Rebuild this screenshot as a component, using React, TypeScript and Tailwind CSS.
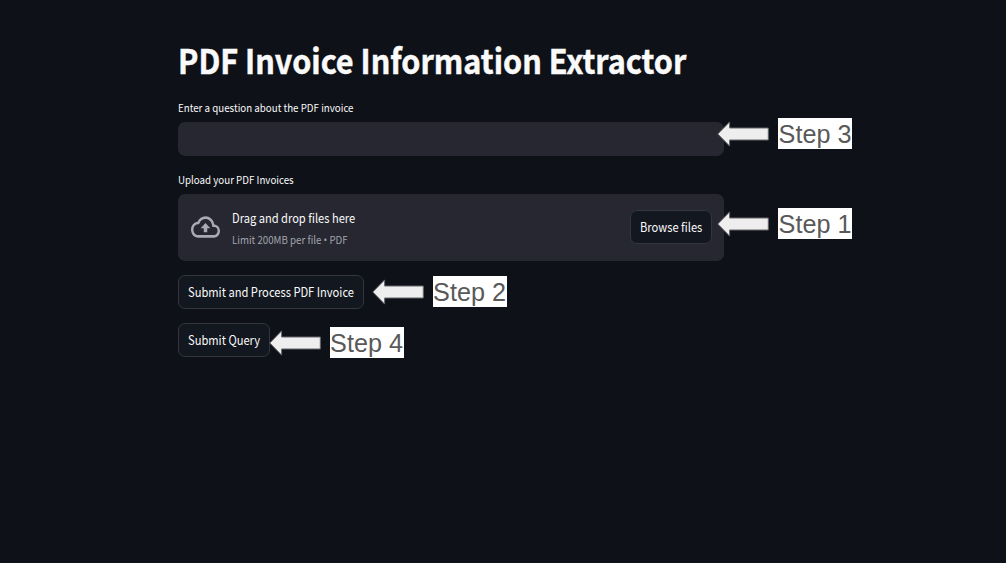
import type { ReactNode } from "react";

function Fit({ children, className }: { children: ReactNode; className: string }) {
  return <span className={`inline-block origin-left whitespace-nowrap ${className}`}>{children}</span>;
}

function Button({ children, className }: { children: ReactNode; className: string }) {
  return (
    <button
      type="button"
      className={`flex h-[34px] shrink-0 items-center rounded-[7px] border border-[#33363e] bg-[#131720] pl-[9px] text-[12.8px] leading-none ${className}`}
    >
      {children}
    </button>
  );
}

function Step({ n, className }: { n: number; className: string }) {
  return (
    <div className={`absolute flex items-center ${className}`}>
      <svg width="52" height="26" viewBox="0 0 52 26" className="mr-[9px] shrink-0">
        <path
          d="M0.8 13 L12.6 0.9 V7 H51.3 V19 H12.6 V25.1 Z"
          fill="#eeeeee"
          stroke="#66676b"
          strokeWidth="1"
        />
      </svg>
      <span className="flex h-[31px] w-[74px] items-center justify-center whitespace-nowrap bg-white pt-[2px] font-['Liberation_Sans',Arial,sans-serif] text-[25.2px] leading-none text-[#595959]">
        Step {n}
      </span>
    </div>
  );
}

export default function App() {
  return (
    <div className="relative h-[563px] w-[1006px] overflow-hidden bg-[#0e1118] font-['Noto_Sans_CJK_SC',sans-serif] text-[#fafafa]">
      <main className="flex w-[724px] flex-col pl-[178px] pt-10">
        <h1 className="flex h-10 items-center text-[34px] font-bold leading-none [-webkit-text-stroke:0.5px_#fafafa]">
          <Fit className="scale-x-[0.9]">PDF Invoice Information Extractor</Fit>
        </h1>
        <label htmlFor="question" className="mt-[19px] flex h-4 items-center text-[11px] leading-none">
          <Fit className="scale-x-[0.886]">Enter a question about the PDF invoice</Fit>
        </label>
        <input id="question" className="mt-[7px] h-[34px] rounded-[7px] bg-[#262730] px-3 outline-none" />
        <div className="mt-[15px] flex h-4 items-center text-[11px] leading-none">
          <Fit className="scale-x-[0.886]">Upload your PDF Invoices</Fit>
        </div>
        <section className="mt-[7px] flex h-[67px] items-center rounded-[7px] bg-[#262730] px-3">
          <svg
            width="29"
            height="32"
            viewBox="0 0 24 24"
            preserveAspectRatio="none"
            fill="#a9aab5"
            className="mb-[2px] ml-[0.5px] mr-[12.5px] shrink-0"
          >
            <path d="M19.35 10.04A7.49 7.49 0 0 0 12 4C9.11 4 6.6 5.64 5.35 8.04A5.994 5.994 0 0 0 0 14c0 3.31 2.69 6 6 6h13c2.76 0 5-2.24 5-5 0-2.64-2.05-4.78-4.65-4.96zM19 18H6c-2.21 0-4-1.79-4-4 0-2.05 1.53-3.76 3.56-3.97l1.07-.11.5-.95A5.469 5.469 0 0 1 12 6c2.62 0 4.88 1.86 5.39 4.43l.3 1.5 1.53.11A2.98 2.98 0 0 1 22 15c0 1.65-1.35 3-3 3zM8 13h2.55v3h2.9v-3H16l-4-4z" />
          </svg>
          <div className="flex flex-1 flex-col pt-[2px]">
            <div className="flex h-5 items-center text-[12.8px] leading-none">
              <Fit className="scale-x-[0.868]">Drag and drop files here</Fit>
            </div>
            <div className="mt-px flex h-5 items-center text-[11px] leading-none text-[#a3a4ad]">
              <Fit className="scale-x-[0.883]">
                Limit 200MB per file <span className="font-['Open_Sans',sans-serif]">•</span> PDF
              </Fit>
            </div>
          </div>
          <Button className="mt-4 w-[82px] self-start">
            <Fit className="scale-x-[0.871]">Browse files</Fit>
          </Button>
        </section>
        <div className="mt-3.5 flex">
          <Button className="w-[186px]">
            <Fit className="scale-x-[0.871]">Submit and Process PDF Invoice</Fit>
          </Button>
        </div>
        <div className="mt-3.5 flex">
          <Button className="w-[92px]">
            <Fit className="scale-x-[0.871]">Submit Query</Fit>
          </Button>
        </div>
      </main>
      <Step n={3} className="left-[717px] top-[118px]" />
      <Step n={1} className="left-[717px] top-[208px]" />
      <Step n={2} className="left-[371.5px] top-[276px]" />
      <Step n={4} className="left-[268.5px] top-[327px]" />
    </div>
  );
}
